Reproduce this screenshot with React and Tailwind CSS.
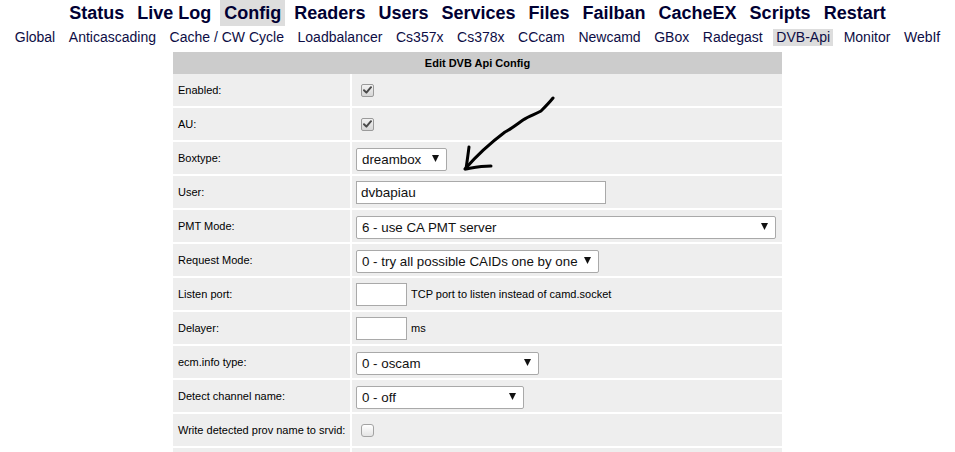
import React from "react";

const FONT = { fontFamily: '"Liberation Sans", Arial, sans-serif' };

const mainMenu = ["Status", "Live Log", "Config", "Readers", "Users", "Services", "Files", "Failban", "CacheEX", "Scripts", "Restart"];
const subMenu = ["Global", "Anticascading", "Cache / CW Cycle", "Loadbalancer", "Cs357x", "Cs378x", "CCcam", "Newcamd", "GBox", "Radegast", "DVB-Api", "Monitor", "WebIf"];

const Check = ({ checked }) =>
  checked ? (
    <span className="ml-[5px] w-[13px] h-[13px] rounded-[2px] border border-[#9a9a9a] bg-gradient-to-b from-[#f2f2f2] to-[#d6d6d6] flex items-center justify-center">
      <svg width="9" height="8" viewBox="0 0 9 8">
        <path d="M1 4.2 L3.4 6.6 L8 1.2" fill="none" stroke="#4a4a4a" strokeWidth="2" strokeLinecap="round" strokeLinejoin="round" />
      </svg>
    </span>
  ) : (
    <span className="ml-[5px] w-[13px] h-[13px] rounded-[3px] border border-[#a3a3a3] bg-gradient-to-b from-[#ffffff] to-[#e4e4e4]" />
  );

const Select = ({ value, w }) => (
  <div className={`relative h-[23px] ${w}`}>
    <select
      defaultValue={value}
      className="appearance-none w-full h-full bg-white border border-[#a9a9a9] rounded-[2px] pl-[5px] text-[13.33px] text-[#111] outline-none"
      style={FONT}
    >
      <option>{value}</option>
    </select>
    <svg className="absolute right-[8px] top-[8px] pointer-events-none" width="7" height="7" viewBox="0 0 7 7">
      <polygon points="0,0 7,0 3.5,7" fill="#111" />
    </svg>
  </div>
);

const Input = ({ value = "", w }) => (
  <input
    defaultValue={value}
    className={`h-[23px] ${w} bg-white border border-[#a9a9a9] px-[4px] text-[13.5px] text-[#111] outline-none`}
    style={FONT}
  />
);

const rows = [
  { label: "Enabled:", el: <Check checked /> },
  { label: "AU:", el: <Check checked /> },
  { label: "Boxtype:", el: <Select value="dreambox" w="w-[91px]" /> },
  { label: "User:", el: <Input value="dvbapiau" w="w-[250px]" /> },
  { label: "PMT Mode:", el: <Select value="6 - use CA PMT server" w="w-[420px]" /> },
  { label: "Request Mode:", el: <Select value="0 - try all possible CAIDs one by one" w="w-[243px]" /> },
  {
    label: "Listen port:",
    el: (
      <>
        <Input w="w-[51px]" />
        <span className="ml-[4px] text-[11px]">TCP port to listen instead of camd.socket</span>
      </>
    ),
  },
  {
    label: "Delayer:",
    el: (
      <>
        <Input w="w-[51px]" />
        <span className="ml-[4px] text-[11px]">ms</span>
      </>
    ),
  },
  { label: "ecm.info type:", el: <Select value="0 - oscam" w="w-[183px]" /> },
  { label: "Detect channel name:", el: <Select value="0 - off" w="w-[168px]" /> },
  { label: "Write detected prov name to srvid:", el: <Check /> },
  { label: "", el: null },
];

export default function App() {
  return (
    <div className="relative w-[955px] h-[452px] overflow-hidden bg-white text-black" style={FONT}>
      {/* MAIN MENU */}
      <div className="flex justify-center gap-[5px]">
        {mainMenu.map((m) => (
          <a
            key={m}
            className={`px-[4px] leading-[26px] text-[18px] font-bold text-[#000033] ${m === "Config" ? "bg-[#dddddd]" : ""}`}
          >
            {m}
          </a>
        ))}
      </div>

      {/* SUB MENU */}
      <div className="flex justify-center gap-[7.6px] mt-[3px]">
        {subMenu.map((m) => (
          <a
            key={m}
            className={`px-[3px] leading-[17px] text-[14px] text-[#0d0d45] ${m === "DVB-Api" ? "bg-[#dddddd]" : ""}`}
          >
            {m}
          </a>
        ))}
      </div>

      {/* CONFIG TABLE */}
      <div className="w-[609px] mx-auto mt-[6px]">
        <div className="h-[22px] bg-[#cccccc] flex items-center justify-center text-[11px] font-bold">
          Edit DVB Api Config
        </div>
        {rows.map((r, i) => (
          <div key={i} className="flex h-[34px]">
            <div className="w-[179px] shrink-0 bg-[#eeeeee] border-b-2 border-r-2 border-white flex items-center pl-[5px] text-[11px] whitespace-nowrap">
              {r.label}
            </div>
            <div className="flex-1 bg-[#eeeeee] border-b-2 border-white flex items-center pl-[4px]">
              {r.el}
            </div>
          </div>
        ))}
      </div>

      {/* hand drawn arrow */}
      <svg className="absolute left-0 top-0 pointer-events-none" width="955" height="452" viewBox="0 0 955 452">
        <path
          d="M553 98 C 549 103, 545 107, 541 111 C 536 114, 529 116, 523 120 C 516 125, 511 129, 505 132 C 493 141, 478 154, 465 169"
          fill="none"
          stroke="#000"
          strokeWidth="3"
          strokeLinecap="round"
          strokeLinejoin="round"
        />
        <path
          d="M469 147 C 468 155, 467 162, 466 169 C 472 168, 480 166, 491 166"
          fill="none"
          stroke="#000"
          strokeWidth="3"
          strokeLinecap="round"
          strokeLinejoin="round"
        />
      </svg>
    </div>
  );
}
